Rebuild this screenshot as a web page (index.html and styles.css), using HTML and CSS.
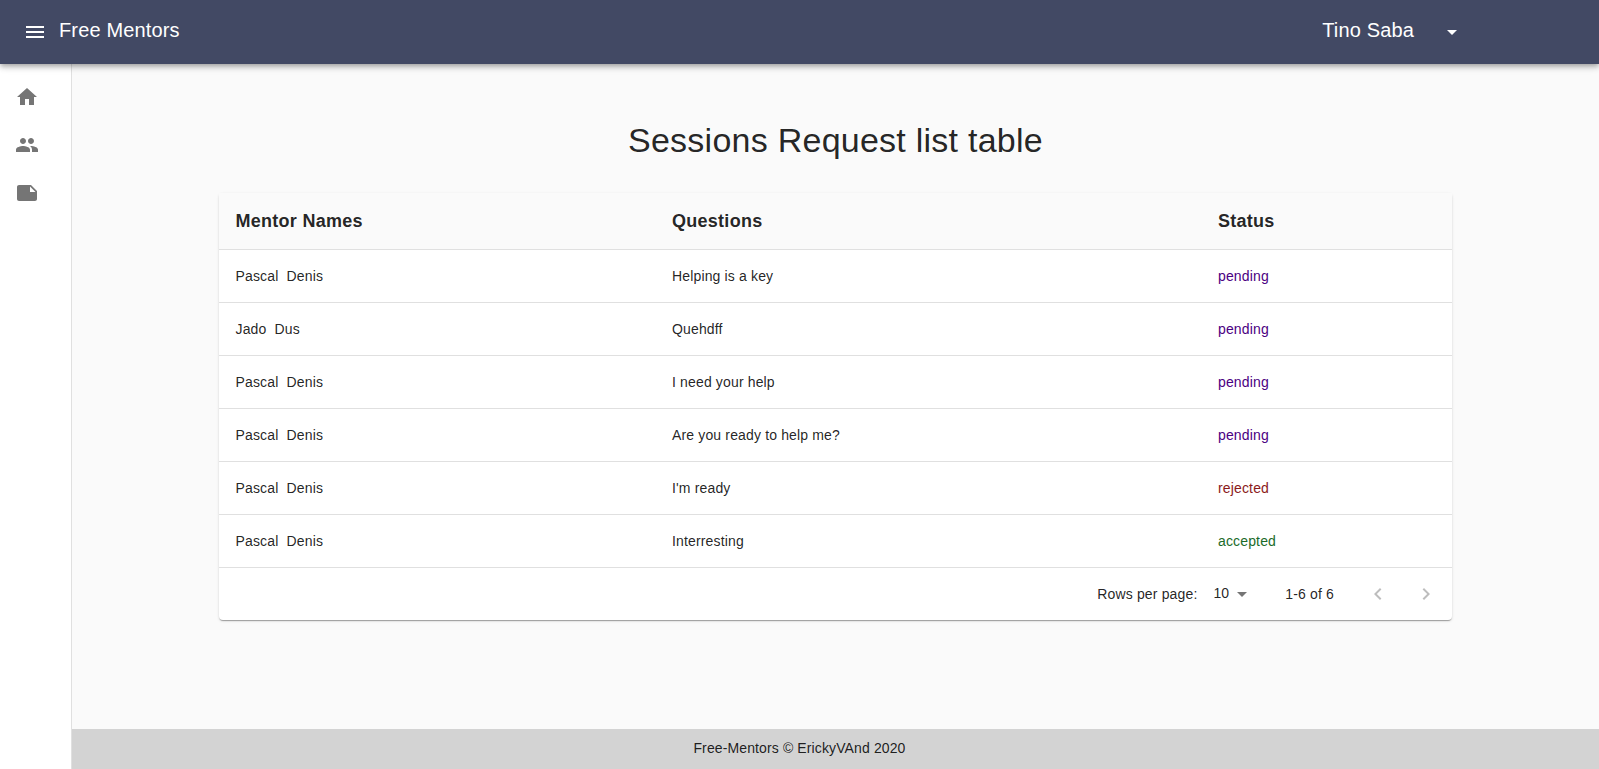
FILE: index.html
```html
<!DOCTYPE html>
<html>
	<head>
		<meta charset="UTF-8">
		<title>Free Mentors</title>
		<link rel="stylesheet" href="styles.css">
	</head>
	<body>
		<header class="appbar">
			<svg class="menu-icon" viewBox="0 0 24 24"><path d="M3 18h18v-2H3v2zm0-5h18v-2H3v2zm0-7v2h18V6H3z"/></svg>
			<h1 class="brand">Free Mentors</h1>
			<div class="user">
				<span class="user-name">Tino Saba</span>
				<svg class="user-caret" viewBox="0 0 24 24"><path d="M7 10l5 5 5-5z"/></svg>
			</div>
		</header>
		<div class="page">
			<nav class="sidebar">
				<svg class="nav-icon" viewBox="0 0 24 24"><path d="M10 20v-6h4v6h5v-8h3L12 3 2 12h3v8z"/></svg>
				<svg class="nav-icon" viewBox="0 0 24 24"><path d="M16 11c1.66 0 2.99-1.34 2.99-3S17.66 5 16 5c-1.66 0-3 1.34-3 3s1.34 3 3 3zm-8 0c1.66 0 2.99-1.34 2.99-3S9.66 5 8 5C6.34 5 5 6.34 5 8s1.34 3 3 3zm0 2c-2.33 0-7 1.17-7 3.5V19h14v-2.5c0-2.33-4.67-3.5-7-3.5zm8 0c-.29 0-.62.02-.97.05 1.16.84 1.97 1.97 1.97 3.45V19h6v-2.5c0-2.33-4.67-3.5-7-3.5z"/></svg>
				<svg class="nav-icon" viewBox="0 0 24 24"><path d="M22 10l-6-6H4c-1.1 0-2 .9-2 2v12.01c0 1.1.9 1.99 2 1.99l16-.01c1.1 0 2-.89 2-1.99V10zm-7-4.5l5.5 5.5H15V5.5z"/></svg>
			</nav>
			<div class="content">
				<main class="main">
					<h2 class="title">Sessions Request list table</h2>
					<div class="card">
						<table class="sessions">
							<thead>
								<tr>
									<th class="col-name">Mentor Names</th>
									<th class="col-question">Questions</th>
									<th>Status</th>
								</tr>
							</thead>
							<tbody>
								<tr><td>Pascal&nbsp; Denis</td><td>Helping is a key</td><td class="pending">pending</td></tr>
								<tr><td>Jado&nbsp; Dus</td><td>Quehdff</td><td class="pending">pending</td></tr>
								<tr><td>Pascal&nbsp; Denis</td><td>I need your help</td><td class="pending">pending</td></tr>
								<tr><td>Pascal&nbsp; Denis</td><td>Are you ready to help me?</td><td class="pending">pending</td></tr>
								<tr><td>Pascal&nbsp; Denis</td><td>I'm ready</td><td class="rejected">rejected</td></tr>
								<tr><td>Pascal&nbsp; Denis</td><td>Interresting</td><td class="accepted">accepted</td></tr>
							</tbody>
						</table>
						<div class="pager">
							<span class="pager-label">Rows per page:</span>
							<span class="pager-size">10</span>
							<svg class="pager-caret" viewBox="0 0 24 24"><path d="M7 10l5 5 5-5z"/></svg>
							<span class="pager-count">1-6 of 6</span>
							<svg class="pager-btn" viewBox="0 0 24 24"><path d="M15.41 7.41L14 6l-6 6 6 6 1.41-1.41L10.83 12z"/></svg>
							<svg class="pager-btn" viewBox="0 0 24 24"><path d="M10 6L8.59 7.41 13.17 12l-4.58 4.59L10 18l6-6z"/></svg>
						</div>
					</div>
				</main>
				<footer class="footer">Free-Mentors © ErickyVAnd 2020</footer>
			</div>
		</div>
	</body>
</html>
```

FILE: styles.css
```css
*{
	margin: 0;
	padding: 0;
	box-sizing: border-box;
}
body{
	height: 100vh;
	overflow: hidden;
	display: flex;
	flex-direction: column;
	font-family: "Liberation Sans", Arial, sans-serif;
	color: rgba(0,0,0,.87);
	background: #fafafa;
}
.appbar{
	height: 64px;
	flex: none;
	display: flex;
	align-items: center;
	padding-left: 23px;
	background: #424964;
	color: #fff;
	position: relative;
	z-index: 2;
	box-shadow: 0 2px 4px -1px rgba(0,0,0,.2), 0 4px 5px 0 rgba(0,0,0,.14), 0 1px 10px 0 rgba(0,0,0,.12);
}
.menu-icon{
	width: 24px;
	height: 24px;
	fill: #fff;
}
.brand{
	margin: -4px 0 0 12px;
	font-size: 20px;
	font-weight: 400;
	line-height: 32px;
	letter-spacing: .15px;
}
.user{
	margin-left: auto;
	margin-right: 135px;
	display: flex;
	align-items: center;
}
.user-name{
	margin-top: -4px;
	font-size: 20px;
	line-height: 32px;
	letter-spacing: .15px;
}
.user-caret{
	width: 24px;
	height: 24px;
	margin-left: 26px;
	fill: #fff;
}
.page{
	flex: 1;
	min-height: 0;
	display: flex;
}
.sidebar{
	width: 72px;
	flex: none;
	display: flex;
	flex-direction: column;
	gap: 24px;
	padding: 21px 0 0 15px;
	background: #fff;
	border-right: 1px solid rgba(0,0,0,.12);
}
.nav-icon{
	width: 24px;
	height: 24px;
	fill: rgba(0,0,0,.54);
}
.content{
	flex: 1;
	min-width: 0;
	display: flex;
	flex-direction: column;
}
.main{
	flex: 1;
	padding: 0 147px;
}
.title{
	margin-top: 54px;
	font-size: 34px;
	font-weight: 400;
	line-height: 44px;
	letter-spacing: .25px;
	text-align: center;
}
.card{
	margin-top: 31px;
	background: #fff;
	border-radius: 4px;
	box-shadow: 0 2px 1px -1px rgba(0,0,0,.2), 0 1px 1px 0 rgba(0,0,0,.14), 0 1px 3px 0 rgba(0,0,0,.12);
}
.sessions{
	width: 100%;
	table-layout: fixed;
	border-collapse: collapse;
}
.sessions th{
	height: 56px;
	padding: 2px 16.5px 0;
	font-size: 18px;
	letter-spacing: .27px;
	text-align: left;
	background: #fafafa;
	border-bottom: 1px solid #e0e0e0;
}
.sessions td{
	height: 53px;
	padding: 0 16.5px;
	font-size: 14px;
	letter-spacing: .15px;
	border-bottom: 1px solid #e0e0e0;
}
.col-name{
	width: 436.5px;
}
.col-question{
	width: 546px;
}
.pending{
	color: #4b0082;
}
.sessions .rejected{
	color: #8b1a1a;
}
.sessions .accepted{
	color: #1b6b2a;
}
.pager{
	height: 52px;
	display: flex;
	align-items: center;
	justify-content: flex-end;
	padding-right: 14px;
	font-size: 14px;
	letter-spacing: .15px;
}
.pager-size{
	margin: -2px 0 0 16px;
}
.pager-caret{
	width: 24px;
	height: 24px;
	margin-left: 1px;
	fill: rgba(0,0,0,.54);
}
.pager-count{
	margin: 0 32px 0 31px;
}
.pager-btn{
	width: 24px;
	height: 24px;
	fill: rgba(0,0,0,.26);
}
.pager-btn + .pager-btn{
	margin-left: 24px;
}
.footer{
	height: 40px;
	flex: none;
	display: flex;
	align-items: center;
	justify-content: center;
	padding: 0 72px 3px 0;
	font-size: 14px;
	letter-spacing: .12px;
	background: #d3d3d3;
}
```
